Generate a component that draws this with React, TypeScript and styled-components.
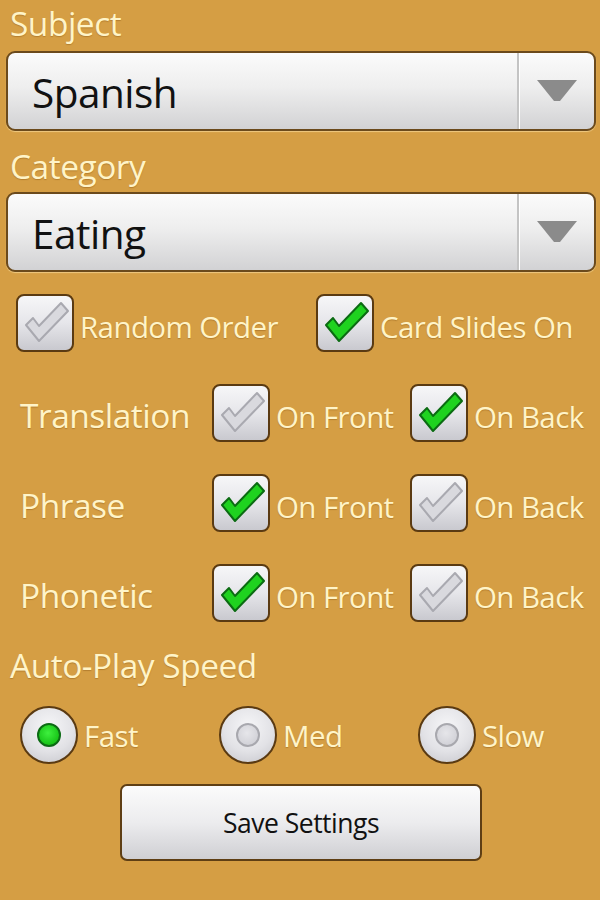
import React, { useState } from "react";
import styled, { createGlobalStyle } from "styled-components";

const Global = createGlobalStyle`
    html, body {
        margin: 0;
        padding: 0;
        background: #d59e44;
    }
    body {
        font-family: "Open Sans", "Noto Sans", sans-serif;
    }
`

type Speed = "Fast" | "Med" | "Slow"

const rows = [
    { name: "Translation", front: false, back: true },
    { name: "Phrase", front: true, back: false },
    { name: "Phonetic", front: true, back: false },
]

const Check = ({ on }: { on: boolean }) => (
    <Box>
        <svg width="58" height="58" viewBox="0 0 58 58">
            <polygon
                points="10,31 17,24 23,32 45,9 52,17 23,47"
                fill={on ? "#1fd21f" : "#d9d9de"}
                stroke={on ? "#0b6b12" : "#a9a9b0"}
                strokeWidth="2"
                strokeLinejoin="round"
            />
        </svg>
    </Box>
)

const Spinner = ({ value }: { value: string }) => (
    <SpinnerBox>
        <SpinnerText>{value}</SpinnerText>
        <SpinnerArrow>
            <svg width="44" height="28" viewBox="0 0 44 28">
                <polygon points="2,3 42,3 25,24 19,24" fill="#8b8b8b" />
            </svg>
        </SpinnerArrow>
    </SpinnerBox>
)

export default function App() {
    const [speed, setSpeed] = useState<Speed>("Fast")
    const [random, setRandom] = useState(false)
    const [slides, setSlides] = useState(true)
    const [opts, setOpts] = useState(rows)

    const toggle = (i: number, key: "front" | "back") =>
        setOpts(opts.map((r, j) => (j === i ? { ...r, [key]: !r[key] } : r)))

    return (
        <Page>
            <Global />
            <Heading $h={51} $pb={5}>Subject</Heading>
            <Spinner value="Spanish" />
            <Heading $h={61} $pt={8}>Category</Heading>
            <Spinner value="Eating" />
            <TopRow>
                <Item onClick={() => setRandom(!random)}>
                    <Check on={random} />
                    <ItemText>Random Order</ItemText>
                </Item>
                <Item onClick={() => setSlides(!slides)}>
                    <Check on={slides} />
                    <ItemText>Card Slides On</ItemText>
                </Item>
            </TopRow>
            {opts.map((r, i) => (
                <OptRow key={r.name}>
                    <RowLabel>{r.name}</RowLabel>
                    <Item onClick={() => toggle(i, "front")}>
                        <Check on={r.front} />
                        <ItemText>On Front</ItemText>
                    </Item>
                    <Item onClick={() => toggle(i, "back")}>
                        <Check on={r.back} />
                        <ItemText>On Back</ItemText>
                    </Item>
                </OptRow>
            ))}
            <Heading $h={54}>Auto-Play Speed</Heading>
            <RadioRow>
                {(["Fast", "Med", "Slow"] as Speed[]).map((s) => (
                    <Item key={s} onClick={() => setSpeed(s)}>
                        <Radio>
                            <Dot $on={speed === s} />
                        </Radio>
                        <RadioText>{s}</RadioText>
                    </Item>
                ))}
            </RadioRow>
            <ButtonRow>
                <SaveButton>Save Settings</SaveButton>
            </ButtonRow>
        </Page>
    )
}

const Page = styled.div`
    width: 600px;
    height: 900px;
    box-sizing: border-box;
    padding: 0 4px 0 6px;
    display: flex;
    flex-direction: column;
    background: #d59e44;
    color: #fff4c8;
`

const Heading = styled.div<{ $h: number; $pt?: number; $pb?: number }>`
    height: ${(p) => p.$h}px;
    box-sizing: border-box;
    padding: ${(p) => p.$pt || 0}px 0 ${(p) => p.$pb || 0}px 4px;
    display: flex;
    align-items: center;
    font-size: 33.5px;
    letter-spacing: -0.5px;
    text-shadow: 0 1px 1px rgba(120, 70, 10, 0.35);
`

const SpinnerBox = styled.div`
    height: 80px;
    box-sizing: border-box;
    display: flex;
    align-items: stretch;
    border: 2px solid #6b4a1c;
    border-radius: 9px;
    background: linear-gradient(#fbfbfb 0%, #eeeeee 45%, #d2d2d4 100%);
    box-shadow: 0 1px 1px rgba(255, 230, 170, 0.6);
    overflow: hidden;
`

const SpinnerText = styled.div`
    flex: 1;
    display: flex;
    align-items: center;
    padding: 2px 0 0 24px;
    font-size: 40.5px;
    letter-spacing: -0.5px;
    color: #111;
`

const SpinnerArrow = styled.div`
    width: 75px;
    display: flex;
    align-items: center;
    justify-content: center;
    border-left: 2px solid #c4c4c4;
    box-shadow: inset 1px 0 0 #ffffff;
`

const TopRow = styled.div`
    margin-top: 6px;
    height: 90px;
    display: grid;
    grid-template-columns: 300px 1fr;
    align-items: center;
    padding-left: 10px;
`

const OptRow = styled.div`
    height: 90px;
    display: grid;
    grid-template-columns: 192px 198px 1fr;
    align-items: center;
    padding-left: 14px;
`

const RadioRow = styled.div`
    height: 86px;
    display: grid;
    grid-template-columns: 199px 199px 1fr;
    align-items: center;
    padding-left: 14px;
`

const RowLabel = styled.div`
    font-size: 33.5px;
    letter-spacing: -0.5px;
    padding-top: 4px;
    text-shadow: 0 1px 1px rgba(120, 70, 10, 0.35);
`

const Item = styled.div`
    display: flex;
    align-items: center;
    gap: 6px;
    cursor: pointer;
`

const ItemText = styled.span`
    font-size: 29.5px;
    letter-spacing: -0.6px;
    padding-top: 6px;
    text-shadow: 0 1px 1px rgba(120, 70, 10, 0.35);
`

const RadioText = styled(ItemText)`
    padding-top: 0;
`

const Box = styled.div`
    width: 58px;
    height: 58px;
    box-sizing: border-box;
    border: 2px solid #5a3a12;
    border-radius: 8px;
    background: linear-gradient(#f6f6f8 0%, #e6e6ea 50%, #c9c9cf 100%);
    display: flex;
    align-items: center;
    justify-content: center;
    flex-shrink: 0;

    svg {
        margin: -2px;
    }
`

const Radio = styled.div`
    width: 58px;
    height: 58px;
    box-sizing: border-box;
    border: 2px solid #5a3a12;
    border-radius: 50%;
    background: radial-gradient(circle at 50% 35%, #f6f6f8 0%, #e2e2e6 55%, #c4c4ca 100%);
    display: flex;
    align-items: center;
    justify-content: center;
    flex-shrink: 0;
`

const Dot = styled.div<{ $on: boolean }>`
    width: 24px;
    height: 24px;
    border-radius: 50%;
    box-sizing: border-box;
    border: 2px solid ${(p) => (p.$on ? "#0c6a14" : "#a8a8ae")};
    background: ${(p) =>
        p.$on
            ? "radial-gradient(circle at 45% 40%, #3ef03e 0%, #18c418 70%)"
            : "radial-gradient(circle at 45% 40%, #e6e6ea 0%, #d0d0d6 80%)"};
`

const ButtonRow = styled.div`
    display: flex;
    justify-content: center;
    margin-top: 6px;
`

const SaveButton = styled.button`
    width: 362px;
    height: 77px;
    border: 2px solid #5e3e14;
    border-radius: 7px;
    background: linear-gradient(#fbfbfb 0%, #ececee 50%, #cfcfd3 100%);
    font-family: "Open Sans", "Noto Sans", sans-serif;
    font-size: 26.5px;
    letter-spacing: -0.5px;
    color: #111;
    cursor: pointer;
`
